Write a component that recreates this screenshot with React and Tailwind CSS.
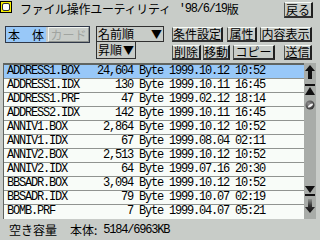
import React from "react";

const JP = "font-['Noto_Sans_CJK_JP','Noto_Sans',sans-serif]";
const MONO = "font-['Liberation_Mono','DejaVu_Sans_Mono',monospace] tracking-[-1.2px]";

function Btn({ w, children, className = "" }) {
  return (
    <div
      className={`h-[15px] ${w} flex items-center justify-center border-l border-t border-r-2 border-b-2 border-l-[#505450] border-t-[#f8fcf8] border-r-[#202020] border-b-[#303030] text-[12px] leading-none text-black ${className}`}
    >
      {children}
    </div>
  );
}

const rows = [
  ["ADDRESS1.BOX", "24,604", "1999.10.12 10:52", true],
  ["ADDRESS1.IDX", "130", "1999.10.11 16:45"],
  ["ADDRESS1.PRF", "47", "1999.02.12 18:14"],
  ["ADDRESS2.IDX", "142", "1999.10.11 16:45"],
  ["ANNIV1.BOX", "2,864", "1999.10.12 10:52"],
  ["ANNIV1.IDX", "67", "1999.08.04 02:11"],
  ["ANNIV2.BOX", "2,513", "1999.10.12 10:52"],
  ["ANNIV2.IDX", "64", "1999.07.16 20:30"],
  ["BBSADR.BOX", "3,094", "1999.10.12 10:52"],
  ["BBSADR.IDX", "79", "1999.10.07 02:19"],
  ["BOMB.PRF", "7", "1999.04.07 05:21"],
];

function fmt(name, size, date) {
  return name.padEnd(14, " ") + size.padStart(7, " ") + " Byte " + date;
}

export default function App() {
  return (
    <div className={`w-[320px] h-[240px] bg-[#c8ccc8] overflow-hidden flex flex-col ${JP} text-black`}>
      {/* header */}
      <div className="h-[24px] flex items-start">
        <div className="w-[12px] h-[12px] mt-[1px] bg-[#f8f000] border border-black flex items-center justify-center">
          <div className="w-[8px] h-[8px] bg-white border border-[#303030] rounded-[2px]"></div>
        </div>
        <div className="ml-[8px] mt-[2px] h-[14px] flex items-center text-[12px] leading-none whitespace-pre">
          <span className="tracking-[-0.3px]">ファイル操作ユーティリティ</span>
          <span className={`${MONO} text-[12px] ml-[2px]`}> '98/6/19</span>
          <span>版</span>
        </div>
        <div className="flex-1"></div>
        <Btn w="w-[29px]" className="mt-[2px] mr-[7px] h-[16px]">戻る</Btn>
      </div>

      {/* controls */}
      <div className="h-[39px] flex items-start">
        <div className="ml-[5px] mt-[2px] w-[85px] h-[17px] border border-[#303848] flex">
          <div className="w-[40px] h-full bg-[#98c8f8] flex items-center justify-between px-[2px] text-[12px] leading-none">
            <span>本</span>
            <span>体</span>
          </div>
          <div className="ml-[2px] flex-1 h-full border-l border-t border-r border-b border-l-[#f0f4f0] border-t-[#f0f4f0] border-r-[#909490] border-b-[#909490] flex items-center justify-center text-[12px] leading-none text-[#a0a4a0]">
            カード
          </div>
        </div>

        <div className="ml-[6px] mt-[2px] flex flex-col">
          <div className="w-[68px] h-[16px] border border-[#303030] flex items-center justify-between pl-[1px] pr-[1px] text-[12px] leading-none">
            <span>名前順</span>
            <span className="text-[11px]">▼</span>
          </div>
          <div className="w-[40px] h-[17px] border border-t-0 border-[#303030] flex items-center justify-between pl-[1px] pr-[1px] text-[12px] leading-none">
            <span>昇順</span>
            <span className="text-[11px]">▼</span>
          </div>
        </div>

        <div className="ml-[8px] flex flex-col">
          <div className="mt-[3px] flex">
            <Btn w="w-[51px]">条件設定</Btn>
            <Btn w="w-[30px]" className="ml-[4px]">属性</Btn>
            <Btn w="w-[52px]" className="ml-[3px]">内容表示</Btn>
          </div>
          <div className="mt-[3px] flex">
            <Btn w="w-[29px]">削除</Btn>
            <Btn w="w-[27px]" className="ml-[2px]">移動</Btn>
            <Btn w="w-[42px]" className="ml-[3px]">コピー</Btn>
            <Btn w="w-[28px]" className="ml-[9px]">送信</Btn>
          </div>
        </div>
      </div>

      {/* list */}
      <div className="flex ml-[3px] h-[156px]">
        <div className="w-[301px] h-full border-l border-t-2 border-[#606460] bg-[#c8ccc8] flex flex-col">
          {rows.map(([n, s, d, sel], i) => (
            <div
              key={i}
              className={`h-[14px] shrink-0 ${i < rows.length - 1 ? "border-b border-[#909490]" : ""} ${sel ? "bg-[#98c8f8]" : "bg-[#f8fcf8]"} pl-[3px] ${MONO} text-[12px] leading-[13px] whitespace-pre overflow-hidden`}
            >
              {fmt(n, s, d)}
            </div>
          ))}
        </div>
        <div className="w-[12px] h-full bg-[#a8aca8] flex flex-col items-center pt-[2px] pb-[6px]">
          <svg width="12" height="14" viewBox="0 0 12 14">
            <polygon points="6,0 11,6 8,6 8,14 4,14 4,6 1,6" fill="#101010" />
          </svg>
          <svg width="12" height="12" viewBox="0 0 12 12" className="mt-[5px]">
            <rect x="1" y="0" width="10" height="2" fill="#101010" />
            <polygon points="6,3 11,11 1,11" fill="#101010" />
          </svg>
          <svg width="12" height="10" viewBox="0 0 12 10" className="mt-[4px]">
            <defs>
              <radialGradient id="g1" cx="0.35" cy="0.35" r="0.7">
                <stop offset="0" stopColor="#909090" />
                <stop offset="1" stopColor="#303030" />
              </radialGradient>
            </defs>
            <circle cx="6" cy="5" r="4.5" fill="url(#g1)" />
            <ellipse cx="6.5" cy="5.5" rx="3" ry="1.2" fill="#f0f0f0" transform="rotate(-35 6.5 5.5)" />
          </svg>
          <div className="flex-1"></div>
          <svg width="12" height="10" viewBox="0 0 12 10">
            <polygon points="1,0 11,0 6,7" fill="#101010" />
            <rect x="1" y="8" width="10" height="2" fill="#101010" />
          </svg>
          <svg width="12" height="14" viewBox="0 0 12 14" className="mt-[3px]">
            <defs>
              <linearGradient id="g2" x1="0" y1="0" x2="0" y2="1">
                <stop offset="0" stopColor="#909490" />
                <stop offset="0.5" stopColor="#303030" />
                <stop offset="1" stopColor="#101010" />
              </linearGradient>
            </defs>
            <polygon points="4,0 8,0 8,8 11,8 6,14 1,8 4,8" fill="url(#g2)" />
          </svg>
        </div>
      </div>

      {/* status */}
      <div className="h-[21px] flex items-center pl-[9px] text-[12px] leading-none">
        <span>空き容量</span>
        <span className="ml-[13px]">本体:</span>
        <span className={`${MONO} ml-[6px]`}>5184/6963KB</span>
      </div>
    </div>
  );
}
